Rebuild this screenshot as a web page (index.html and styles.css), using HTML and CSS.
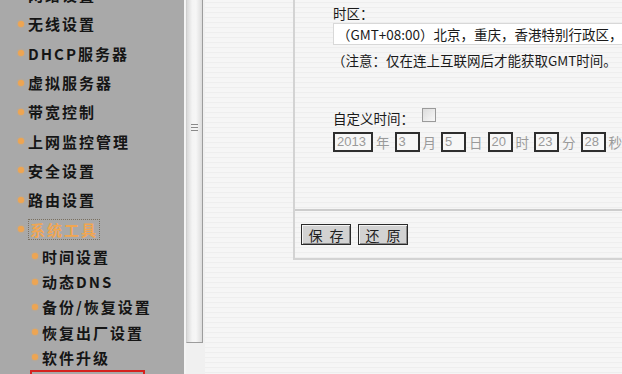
FILE: index.html
```html
<!DOCTYPE html>
<html lang="zh-CN">
<head>
<meta charset="utf-8">
<title>时间设置</title>
<link rel="stylesheet" href="styles.css">
</head>
<body>
<div class="page">
  <nav class="sidebar">
    <ul class="menu">
      <li class="item"><span class="dot"></span>网络设置</li>
      <li class="item"><span class="dot"></span>无线设置</li>
      <li class="item"><span class="dot"></span>DHCP服务器</li>
      <li class="item"><span class="dot"></span>虚拟服务器</li>
      <li class="item"><span class="dot"></span>带宽控制</li>
      <li class="item"><span class="dot"></span>上网监控管理</li>
      <li class="item"><span class="dot"></span>安全设置</li>
      <li class="item"><span class="dot"></span>路由设置</li>
      <li class="item active"><span class="dot"></span><span class="active-label">系统工具</span></li>
      <li class="sub"><span class="dot"></span>时间设置</li>
      <li class="sub"><span class="dot"></span>动态DNS</li>
      <li class="sub"><span class="dot"></span>备份/恢复设置</li>
      <li class="sub"><span class="dot"></span>恢复出厂设置</li>
      <li class="sub"><span class="dot"></span>软件升级</li>
      <li class="sub marked">重启路由器</li>
    </ul>
  </nav>
  <div class="scrollbar">
    <div class="thumb"><span class="grip"></span></div>
  </div>
  <main class="main">
    <section class="panel">
      <div class="form">
        <div class="label-line">时区：</div>
        <div class="select">（GMT+08:00）北京，重庆，香港特别行政区，乌鲁木齐</div>
        <div class="note">（注意：仅在连上互联网后才能获取GMT时间。</div>
        <div class="custom-line">自定义时间：<span class="checkbox"></span></div>
        <div class="time-row">
          <span class="field wide">2013</span><span class="unit">年</span>
          <span class="field">3</span><span class="unit">月</span>
          <span class="field">5</span><span class="unit">日</span>
          <span class="field">20</span><span class="unit">时</span>
          <span class="field">23</span><span class="unit">分</span>
          <span class="field">28</span><span class="unit">秒</span>
        </div>
      </div>
      <div class="actions">
        <span class="btn"><span class="btn-char">保</span><span class="btn-char">存</span></span>
        <span class="btn"><span class="btn-char">还</span><span class="btn-char">原</span></span>
      </div>
    </section>
  </main>
</div>
</body>
</html>
```

FILE: styles.css
```css
* { box-sizing: border-box; }
html, body { margin: 0; padding: 0; }
body {
  width: 622px;
  height: 374px;
  overflow: hidden;
  font-family: "Noto Sans CJK SC", "DejaVu Sans", sans-serif;
}
.page {
  display: flex;
  width: 622px;
  height: 374px;
  overflow: hidden;
}

/* sidebar */
.sidebar {
  width: 184px;
  flex: none;
  background: #a9a9a9;
  overflow: hidden;
}
.menu {
  list-style: none;
  margin: -20px 0 0 0;
  padding: 0;
}
.item, .sub {
  display: flex;
  align-items: center;
  font-weight: bold;
  font-size: 15px;
  letter-spacing: 2px;
  color: #151515;
  white-space: nowrap;
}
.item { height: 29.3px; padding-left: 18px; }
.sub { height: 25.25px; padding-left: 32px; }
.dot {
  width: 6px;
  height: 6px;
  border-radius: 50%;
  background: #eda553;
  box-shadow: 0 0 2px #eda553;
  margin-right: 4px;
  flex: none;
}
.active-label {
  color: #f1a651;
  border: 1px dotted #7a7060;
  padding: 0 1px;
  line-height: 19px;
}
.marked {
  margin-left: 30px;
  padding-left: 10px;
  width: 115px;
  border: 2px solid #d5221f;
  color: #151515;
}

/* scrollbar */
.scrollbar {
  width: 21px;
  flex: none;
  background: #f0f0f0;
  border-left: 2px solid #f4f4f4;
}
.thumb {
  width: 17px;
  height: 343px;
  background: linear-gradient(to right, #d9d9d9, #f4f4f4 35%, #f6f6f6 60%, #dcdcdc);
  border-right: 1px solid #9c9c9c;
  border-bottom: 1px solid #9c9c9c;
  border-left: 1px solid #cfcfcf;
  display: flex;
  justify-content: center;
  padding-top: 124px;
}
.grip {
  width: 7px;
  height: 8px;
  background: repeating-linear-gradient(to bottom, #8a8a8a 0 1px, transparent 1px 3px);
}

/* main */
.main {
  flex: 1;
  background: repeating-linear-gradient(to bottom, #f6f6f6 0 2px, #eeeeee 2px 3px, #f5f5f5 3px 5px);
  overflow: hidden;
  padding-left: 88px;
}
.panel {
  width: 420px;
  border-left: 2px solid #d3d3d3;
  border-bottom: 2px solid #d3d3d3;
  color: #1a1a1a;
  font-size: 13.5px;
}
.form {
  height: 211px;
  padding: 4px 0 0 38px;
  border-bottom: 2px solid #cdcdcd;
}
.label-line {
  height: 18px;
  line-height: 18px;
}
.select {
  margin-top: 1px;
  height: 22px;
  line-height: 20px;
  width: 400px;
  background: #ffffff;
  border: 1px solid #d8d8d8;
  padding-left: 3px;
  white-space: nowrap;
  overflow: hidden;
}
.note {
  margin-top: 5px;
  height: 20px;
  line-height: 20px;
  white-space: nowrap;
  margin-left: -1px;
}
.custom-line {
  margin-top: 38px;
  height: 20px;
  line-height: 20px;
  display: flex;
  align-items: center;
}
.checkbox {
  width: 14px;
  height: 14px;
  margin-left: 8px;
  margin-top: -6px;
  border: 1px solid #9a9a9a;
  background: linear-gradient(135deg, #dcdcdc, #f8f8f8);
}
.time-row {
  margin-top: 4px;
  height: 20px;
  display: flex;
  align-items: center;
  white-space: nowrap;
}
.field {
  width: 25px;
  height: 20px;
  border: 2px solid #2e2e2e;
  background: #f7f7f7;
  font-family: "Liberation Sans", Arial, sans-serif;
  font-size: 13px;
  line-height: 16px;
  color: #9a9a9a;
  padding-left: 2px;
  flex: none;
}
.field.wide { width: 40px; }
.unit {
  color: #9a9a9a;
  margin: 0 5px 0 3px;
  flex: none;
}
.actions {
  height: 47px;
  padding: 13px 0 0 6px;
  display: flex;
  gap: 7px;
  align-items: flex-start;
}
.btn {
  width: 50px;
  height: 21px;
  background: #d2d2d2;
  border: 1px solid #2a2a2a;
  box-shadow: inset 1px 1px 0 #f4f4f4, inset -1px -1px 0 #8a8a8a;
  display: flex;
  align-items: center;
  justify-content: center;
  gap: 7px;
  font-size: 14px;
  color: #202020;
}
```
